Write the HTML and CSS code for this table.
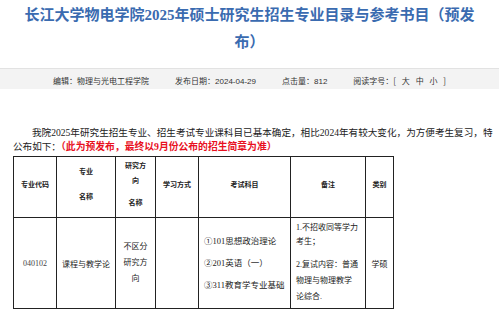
FILE: index.html
```html
<!DOCTYPE html>
<html lang="zh-CN">
<head>
<meta charset="utf-8">
<title>长江大学物电学院2025年硕士研究生招生专业目录与参考书目（预发布）</title>
<link rel="stylesheet" href="styles.css">
</head>
<body>
<div class="page">
  <h1 class="title">长江大学物电学院2025年硕士研究生招生专业目录与参考书目（预发布）</h1>
  <div class="meta">
    <span>编辑：物理与光电工程学院</span>
    <span>发布日期：<span class="num">2024-04-29</span></span>
    <span>点击量：<span class="num">812</span></span>
    <span class="size">阅读字号：<span class="sizes">[ 大 中 小 ]</span></span>
  </div>
  <p class="intro">我院2025年研究生招生专业、招生考试专业课科目已基本确定，相比2024年有较大变化，为方便考生复习，特公布如下：<strong class="note">（此为预发布，最终以9月份公布的招生简章为准）</strong></p>
  <table class="catalog">
    <colgroup>
      <col class="c1"><col class="c2"><col class="c3"><col class="c4"><col class="c5"><col class="c6"><col class="c7">
    </colgroup>
    <thead>
      <tr class="head-row">
        <th>专业代码</th>
        <th><div class="h2a">专业</div><div class="h2b">名称</div></th>
        <th class="narrow"><div class="h3a">研究方向</div><div class="h3b">名称</div></th>
        <th>学习方式</th>
        <th>考试科目</th>
        <th>备注</th>
        <th>类别</th>
      </tr>
    </thead>
    <tbody>
      <tr class="body-row">
        <td class="code">040102</td>
        <td>课程与教学论</td>
        <td class="narrow">不区分研究方向</td>
        <td></td>
        <td class="subjects">
          <div>①101思想政治理论</div>
          <div>②201英语（一）</div>
          <div>③311教育学专业基础</div>
        </td>
        <td class="remarks">
          <p class="r1">1.不招收同等学力考生；</p>
          <p class="r2">2.复试内容：普通物理与物理教学论综合.</p>
        </td>
        <td>学硕</td>
      </tr>
    </tbody>
  </table>
</div>
</body>
</html>
```
FILE: styles.css
```css
* { box-sizing: border-box; }
html, body { margin: 0; padding: 0; background: #fff; }
body {
  font-family: "Liberation Serif", "Noto Sans CJK SC", serif;
  color: #222;
}
.page { width: 499px; }
.title {
  margin: 2px 0 0;
  padding: 0 20px;
  font-size: 15px;
  line-height: 27px;
  font-weight: bold;
  text-align: center;
  color: #3a6bb0;
}
.meta {
  margin-top: 12px;
  height: 21px;
  background: #f3f3f3;
  border-top: 1px solid #e2e2e2;
  display: flex;
  justify-content: center;
  align-items: center;
  gap: 26px;
  padding-top: 3px;
  font-family: "Noto Sans CJK SC", sans-serif;
  font-size: 8px;
  color: #333;
}
.meta .num { font-family: "Liberation Sans", sans-serif; }
.meta .sizes { word-spacing: 4px; }
.intro {
  margin: 37px 2px 2px 13px;
  font-size: 9.6px;
  line-height: 14px;
  text-indent: 19px;
  color: #222;
}
.note { color: #e8101e; font-weight: bold; font-size: 9.8px; }
.catalog {
  margin-left: 13px;
  border-collapse: collapse;
  table-layout: fixed;
  width: 381px;
  font-family: "Liberation Serif", "Noto Sans CJK SC", serif;
  font-size: 8px;
  color: #222;
}
.c1 { width: 43px; }
.c2 { width: 59px; }
.c3 { width: 40px; }
.c4 { width: 43px; }
.c5 { width: 92px; }
.c6 { width: 75px; }
.c7 { width: 28px; }
.catalog th, .catalog td {
  border: 1px solid #222;
  text-align: center;
  vertical-align: middle;
  padding: 0 3px;
}
.catalog th {
  font-family: "Noto Sans CJK SC", sans-serif;
  font-size: 7px;
  font-weight: bold;
  line-height: 15px;
  padding-bottom: 6px;
}
.head-row { height: 61px; }
.body-row { height: 91px; }
.catalog th.narrow { padding-left: 2px; padding-right: 2px; }
.catalog td.narrow { padding-left: 7px; padding-right: 7px; line-height: 16px; }
.h2b { margin-top: 10px; }
.h3a { width: 22px; margin: 0 auto; }
.h3b { margin-top: 7px; }
.code { font-size: 8px; color: #444; }
.subjects {
  text-align: left !important;
  padding-left: 5px !important;
  line-height: 22px;
  font-size: 8.5px;
}
.remarks {
  text-align: left !important;
  padding: 0 7px 0 5px !important;
}
.remarks p { margin: 0; }
.r1 { line-height: 14px; margin-bottom: 8px !important; }
.r2 { line-height: 16px; }
```
